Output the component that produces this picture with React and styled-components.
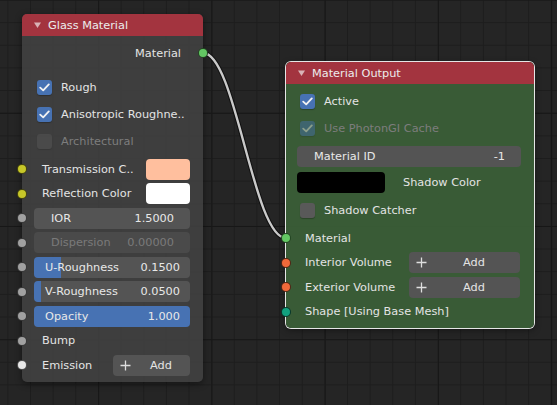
import React from 'react';
import styled, { createGlobalStyle, css } from 'styled-components';

const GlobalStyle = createGlobalStyle`
  html, body { margin: 0; padding: 0; background: #242424; }
  body { font-family: "DejaVu Sans", "Noto Sans", sans-serif; -webkit-font-smoothing: antialiased; }
  * { box-sizing: border-box; }
`;

const Canvas = styled.div`
  position: relative;
  width: 557px;
  height: 405px;
  overflow: hidden;
  background-color: #252525;
  background-image:
    linear-gradient(to right, #171717 1px, transparent 1px),
    linear-gradient(to bottom, #171717 1px, transparent 1px),
    linear-gradient(to right, #1d1d1d 1px, transparent 1px),
    linear-gradient(to bottom, #1d1d1d 1px, transparent 1px);
  background-size: 113.25px 100%, 100% 113.25px, 22.65px 100%, 100% 22.65px;
  background-position: 98.2px 0, 0 -0.5px, 7.4px 0, 0 -0.5px;
`;

const LinkLayer = styled.svg`
  position: absolute;
  left: 0;
  top: 0;
  width: 557px;
  height: 405px;
  pointer-events: none;
`;

const Node = styled.div`
  position: absolute;
  left: ${p => p.$x}px;
  top: ${p => p.$y}px;
  width: ${p => p.$w}px;
  border-radius: 5px;
  background: ${p => p.$body};
  box-shadow: ${p => (p.$active ? '0 0 0 1px #e6e6e6, ' : '')}0 2px 7px rgba(0, 0, 0, 0.45);
  color: #e4e4e4;
  font-size: 11.3px;
  display: flex;
  flex-direction: column;
`;

const Header = styled.div`
  height: 22px;
  background: #a3343f;
  border-radius: 5px 5px 0 0;
  display: flex;
  align-items: center;
  gap: 7px;
  padding-left: 12px;
  color: #ececec;
  font-size: 11.3px;
`;

const Tri = () => (
  <svg width="7" height="6" viewBox="0 0 7 6">
    <path d="M0 0.5 L7 0.5 L3.5 6 Z" fill="#d9b3b6" />
  </svg>
);

const Body = styled.div`
  display: flex;
  flex-direction: column;
  padding-top: ${p => p.$pt}px;
  padding-bottom: ${p => p.$pb}px;
`;

const Spacer = styled.div`
  height: ${p => p.$h}px;
  flex: none;
`;

const Row = styled.div`
  position: relative;
  height: ${p => p.$h}px;
  flex: none;
  display: flex;
  align-items: center;
  justify-content: ${p => p.$justify || 'flex-start'};
  padding-left: ${p => p.$pl || 0}px;
  padding-right: ${p => p.$pr || 0}px;
  white-space: nowrap;
`;

const Label = styled.span`
  flex: ${p => (p.$grow ? 1 : 'none')};
  color: ${p => (p.$dim ? '#7d7d7d' : 'inherit')};
  margin-left: ${p => p.$ml || 0}px;
`;

const Socket = styled.span`
  position: absolute;
  top: 50%;
  ${p => (p.$side === 'right' ? 'right: -5px;' : 'left: -5px;')}
  width: 10px;
  height: 10px;
  margin-top: -5px;
  border-radius: 50%;
  background: ${p => p.$color};
  border: 1px solid rgba(0, 0, 0, 0.65);
`;

const Box = styled.span`
  width: 15px;
  height: 15px;
  border-radius: 3px;
  flex: none;
  display: flex;
  align-items: center;
  justify-content: center;
  margin-right: 9px;
  background: ${p => (p.$checked ? '#4772b3' : '#595959')};
  box-shadow: 0 1px 1px rgba(0, 0, 0, 0.25);
  ${p => p.$dim && css`opacity: 0.45;`}
`;

const Check = () => (
  <svg width="11" height="9" viewBox="0 0 11 9">
    <path d="M1.2 4.6 L4.2 7.4 L9.8 1.4" fill="none" stroke="#f2f2f2" strokeWidth="1.8" strokeLinecap="round" strokeLinejoin="round" />
  </svg>
);

const CheckRow = ({ h, pl, checked, dim, children }) => (
  <Row $h={h} $pl={pl}>
    <Box $checked={checked} $dim={dim}>{checked && <Check />}</Box>
    <Label $dim={dim}>{children}</Label>
  </Row>
);

const Swatch = styled.span`
  flex: none;
  width: ${p => p.$w}px;
  height: 21px;
  border-radius: 4px;
  background: ${p => p.$color};
  margin-left: ${p => p.$ml || 0}px;
  margin-right: ${p => p.$mr || 0}px;
`;

const Field = styled.div`
  flex: 1;
  height: 21px;
  margin: 0 ${p => p.$mr}px 0 ${p => p.$ml}px;
  border-radius: 4px;
  background: ${p =>
    p.$fill != null
      ? `linear-gradient(to right, #4772b3 ${p.$fill}px, #545454 ${p.$fill}px)`
      : '#545454'};
  display: flex;
  align-items: center;
  justify-content: space-between;
  padding: ${p => (p.$slider ? '0 10px 0 11px' : '0 16px 0 17px')};
  color: ${p => (p.$dim ? '#7a7a7a' : '#e8e8e8')};
  ${p => p.$dim && css`background: #4a4a4a;`}
`;

const AddButton = styled.div`
  flex: none;
  width: ${p => p.$w}px;
  height: 21px;
  margin-right: ${p => p.$mr}px;
  border-radius: 4px;
  background: #545454;
  display: flex;
  align-items: center;
  color: #e4e4e4;
`;

const IconBox = styled.span`
  width: 24px;
  flex: none;
  display: flex;
  justify-content: center;
`;

const AddText = styled.span`
  flex: 1;
  text-align: center;
  padding-right: 5px;
`;

const Plus = () => (
  <svg width="11" height="11" viewBox="0 0 11 11">
    <path d="M5.5 0.5 V10.5 M0.5 5.5 H10.5" stroke="#dedede" strokeWidth="1.3" />
  </svg>
);

const Add = ({ w, mr }) => (
  <AddButton $w={w} $mr={mr}>
    <IconBox><Plus /></IconBox>
    <AddText>Add</AddText>
  </AddButton>
);

const YELLOW = '#c7c729';
const GREY = '#a1a1a1';
const GREEN = '#63c763';
const ORANGE = '#f0693a';
const TEAL = '#12a07e';

const SockRow = ({ color, children, h = 24.5 }) => (
  <Row $h={h}>
    <Socket $color={color} />
    {children}
  </Row>
);

export default function App() {
  const link = 'M203 53 C236 53 253 238 286 238';
  return (
    <>
      <GlobalStyle />
      <Canvas>
        <LinkLayer viewBox="0 0 557 405">
          <path d={link} fill="none" stroke="rgba(0,0,0,0.55)" strokeWidth="4.5" />
          <path d={link} fill="none" stroke="#c9c9c9" strokeWidth="2.4" />
        </LinkLayer>

        <Node $x={22} $y={14} $w={181} $body="rgba(64,64,64,0.92)">
          <Header><Tri />Glass Material</Header>
          <Body $pt={5} $pb={4.5}>
            <Row $h={24} $justify="flex-end" $pr={22}>
              Material
              <Socket $side="right" $color={GREEN} />
            </Row>
            <Spacer $h={9} />
            <CheckRow h={27} pl={15} checked>Rough</CheckRow>
            <CheckRow h={27} pl={15} checked>Anisotropic Roughne..</CheckRow>
            <CheckRow h={27} pl={15} dim>Architectural</CheckRow>
            <Spacer $h={2} />
            <SockRow color={YELLOW}>
              <Label $grow $ml={20}>Transmission C..</Label>
              <Swatch $w={44} $mr={13} $color="#ffbf9e" />
            </SockRow>
            <SockRow color={YELLOW}>
              <Label $grow $ml={20}>Reflection Color</Label>
              <Swatch $w={44} $mr={13} $color="#ffffff" />
            </SockRow>
            <SockRow color={GREY}>
              <Field $ml={12} $mr={13}><span>IOR</span><span>1.5000</span></Field>
            </SockRow>
            <SockRow color={GREY}>
              <Field $ml={12} $mr={13} $dim><span>Dispersion</span><span>0.00000</span></Field>
            </SockRow>
            <SockRow color={GREY}>
              <Field $ml={12} $mr={13} $slider $fill={27}><span>U-Roughness</span><span>0.1500</span></Field>
            </SockRow>
            <SockRow color={GREY}>
              <Field $ml={12} $mr={13} $slider $fill={7}><span>V-Roughness</span><span>0.0500</span></Field>
            </SockRow>
            <SockRow color={GREY}>
              <Field $ml={12} $mr={13} $slider $fill={156}><span>Opacity</span><span>1.000</span></Field>
            </SockRow>
            <SockRow color={GREY}>
              <Label $ml={20}>Bump</Label>
            </SockRow>
            <SockRow color="#e8e8e8">
              <Label $grow $ml={20}>Emission</Label>
              <Add w={77} mr={13} />
            </SockRow>
          </Body>
        </Node>

        <Node $x={286} $y={62} $w={248} $body="rgba(58,94,55,0.96)" $active>
          <Header><Tri />Material Output</Header>
          <Body $pt={3.5} $pb={4}>
            <CheckRow h={27} pl={14} checked>Active</CheckRow>
            <CheckRow h={27} pl={14} checked dim>Use PhotonGI Cache</CheckRow>
            <Row $h={29}>
              <Field $ml={11} $mr={13}><span>Material ID</span><span>-1</span></Field>
            </Row>
            <Row $h={24}>
              <Swatch $w={88} $ml={11} $color="#000000" />
              <Label $ml={18}>Shadow Color</Label>
            </Row>
            <CheckRow h={31} pl={14}>Shadow Catcher</CheckRow>
            <SockRow color={GREEN} h={25}>
              <Label $ml={19}>Material</Label>
            </SockRow>
            <SockRow color={ORANGE}>
              <Label $grow $ml={19}>Interior Volume</Label>
              <Add w={111} mr={14} />
            </SockRow>
            <SockRow color={ORANGE}>
              <Label $grow $ml={19}>Exterior Volume</Label>
              <Add w={111} mr={14} />
            </SockRow>
            <SockRow color={TEAL}>
              <Label $ml={19}>Shape [Using Base Mesh]</Label>
            </SockRow>
          </Body>
        </Node>
      </Canvas>
    </>
  );
}
